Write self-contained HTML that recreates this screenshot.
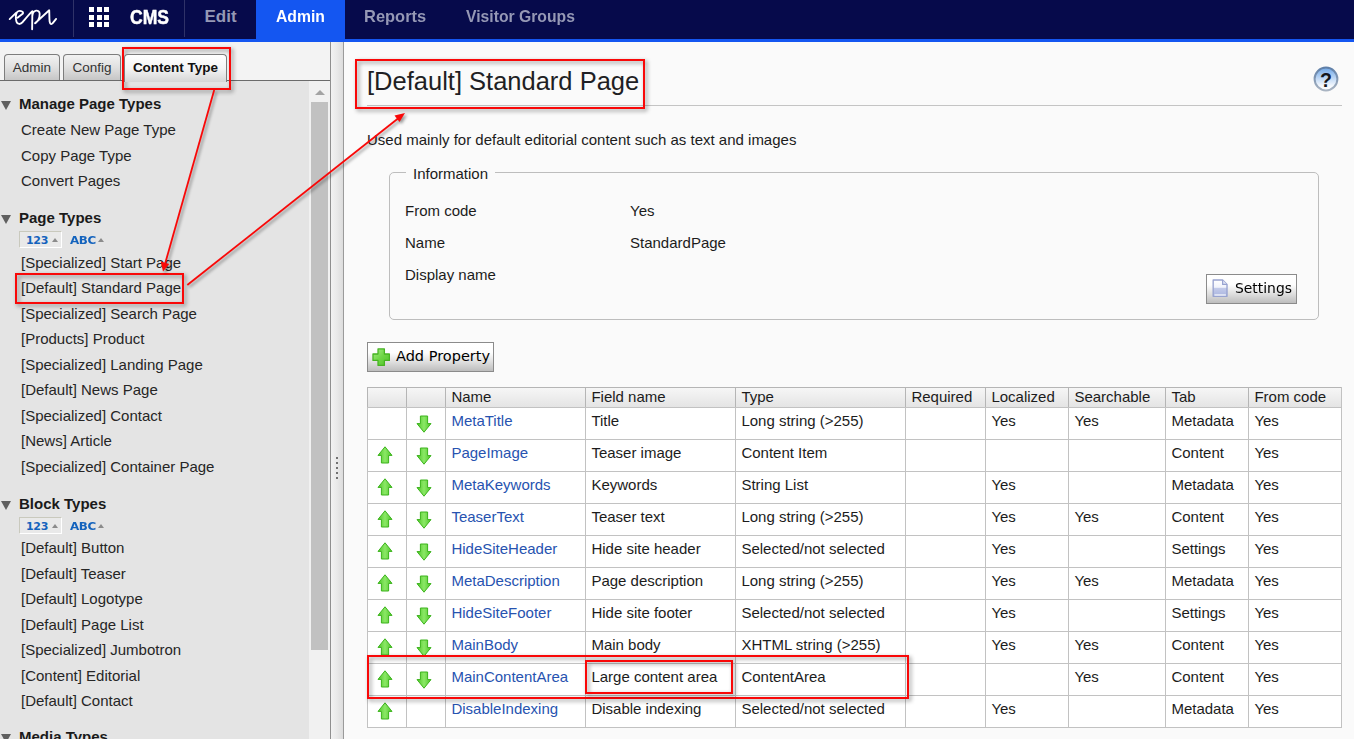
<!DOCTYPE html>
<html lang="en">
<head>
<meta charset="utf-8">
<title>CMS Admin - [Default] Standard Page</title>
<style>
*{box-sizing:border-box;margin:0;padding:0}
html,body{width:1354px;height:739px;overflow:hidden;background:#fafafa}
body{font-family:"Liberation Sans",Arial,sans-serif;font-size:15px;color:#1c1c1c;position:relative}
.abs{position:absolute}
/* ---------- top navigation ---------- */
#nav{position:absolute;left:0;top:0;width:1354px;height:39px;background:#060a4b}
#navbar{position:absolute;left:0;top:39px;width:1354px;height:3px;background:#1456f1}
#nav .div{position:absolute;top:0;width:1px;height:37px;background:#2f3268}
#nav .item{position:absolute;top:0;height:38px;line-height:33px;font-size:17px;font-weight:bold;color:#9598b5;white-space:nowrap;transform-origin:0 50%}
#nav .active{position:absolute;left:256px;top:0;width:89px;height:39px;background:#1456f1}
#nav .cms{position:absolute;left:130px;top:0;height:38px;line-height:35px;font-size:19.5px;font-weight:bold;color:#fff;transform-origin:0 50%;transform:scaleX(.9);-webkit-text-stroke:.45px #fff}
#grid{position:absolute;left:89px;top:7px;width:20px;height:20px}
#grid i{position:absolute;width:5px;height:5px;background:#fff}
/* ---------- left panel ---------- */
#left{position:absolute;left:0;top:42px;width:331px;height:697px;background:#e4e4e4;overflow:hidden}
#tabstrip{position:absolute;left:0;top:0;width:331px;height:38px;background:#f3f3f3}
#tabline{position:absolute;left:0;top:38px;width:331px;height:1px;background:#6b6b6b}
.tab{position:absolute;top:12px;height:26px;border:1px solid #7d7d7d;border-bottom:none;border-radius:4px 4px 0 0;background:linear-gradient(#f2f2f2,#e0e0e0 50%,#c6c6c6);font-size:13.5px;line-height:25px;text-align:center;color:#333;white-space:nowrap}
.tab.sel{background:linear-gradient(#ffffff,#f4f4f4 50%,#d6d6d6);font-weight:bold;color:#111;height:28px;z-index:2}
#list{position:absolute;left:0;top:39px;width:310px}
.hd{position:absolute;left:19px;font-weight:bold;font-size:15px;line-height:20px;color:#1a1a1a;white-space:nowrap}
.tri{position:absolute;left:1px;width:0;height:0;border-left:5.5px solid transparent;border-right:5.5px solid transparent;border-top:9.5px solid #5f5f5f}
.it{position:absolute;left:21px;font-size:15px;line-height:20px;color:#262626;white-space:nowrap}
.sort{position:absolute;height:17px;font-family:"DejaVu Sans","Liberation Sans",sans-serif;font-weight:bold;font-size:11px;line-height:19px;color:#1463bd;white-space:nowrap;letter-spacing:-.3px}
.sort.box{line-height:17px;border:1px solid;border-color:#c9c9bd #fff #fff #c9c9bd;background:#e9e9e9}
.sort b{position:absolute;width:0;height:0;border-left:3.5px solid transparent;border-right:3.5px solid transparent;border-bottom:4px solid #8b8b8b}
.sort span{display:inline-block;transform-origin:0 50%}
#sbtrack{position:absolute;left:309px;top:39px;width:22px;height:658px;background:#f1f1f1}
#sbthumb{position:absolute;left:311px;top:60px;width:17px;height:548px;background:#c1c1c1}
#sbarrow{position:absolute;left:315px;top:48px;width:0;height:0;border-left:5px solid transparent;border-right:5px solid transparent;border-bottom:5px solid #a3a3a3}
#leftedge{position:absolute;left:330px;top:42px;width:1px;height:697px;background:#8f8f8f}
/* ---------- splitter ---------- */
#split{position:absolute;left:331px;top:42px;width:13px;height:697px;background:linear-gradient(90deg,#f2f2f2,#e9e9e9 50%,#dcdcdc);border-right:1px solid #9a9a9a}
#split i{position:absolute;left:5px;width:2.4px;height:2.4px;border-radius:1px;background:#4a4a4a}
/* ---------- content ---------- */
#content{position:absolute;left:344px;top:42px;width:1010px;height:697px;background:#fafafa}
h1{position:absolute;left:367px;top:63px;font-size:25.5px;font-weight:normal;line-height:36px;color:#1f1f24;white-space:nowrap}
#h1line{position:absolute;left:367px;top:105px;width:975px;height:1px;background:#c4c4c4}
#desc{position:absolute;left:367px;top:130px;line-height:20px;white-space:nowrap;color:#1c1c1c}
#help{position:absolute;left:1312.3px;top:65.4px;width:28px;height:28px}
#fs{position:absolute;left:389px;top:172px;width:930px;height:148px;border:1px solid #bdbdbd;border-radius:5px}
#fs .lg{position:absolute;left:16px;top:-9px;padding:0 7px;background:#fafafa;line-height:20px;white-space:nowrap}
.k,.v{position:absolute;line-height:20px;white-space:nowrap}
.k{left:405px}.v{left:630px}
.btn{position:absolute;border:1px solid #8b8b8b;background:linear-gradient(#ffffff,#fdfdfd 35%,#dcdcdc 70%,#bdbdbd);font-family:"DejaVu Sans","Liberation Sans",sans-serif;font-size:14.5px;color:#000;white-space:nowrap}
/* ---------- table ---------- */
#tbl{position:absolute;left:367px;top:387px;border-collapse:separate;border-spacing:0;table-layout:fixed;width:975px;background:#fff;border-right:1px solid #c2c2c2;border-bottom:1px solid #c2c2c2}
#tbl th,#tbl td{border-left:1px solid #c2c2c2;border-top:1px solid #c2c2c2;font-weight:normal;text-align:left;padding:0 0 0 5.4px;white-space:nowrap;overflow:hidden;vertical-align:top;color:#1c1c1c}
#tbl th{height:20px;line-height:18px;background:linear-gradient(#f6f6f6,#e4e4e4);border-color:#b5b5b5}
#tbl td{height:32px;line-height:26px}
#tbl a{color:#2753b0;text-decoration:none}
#tbl td.ic{padding:0}
#tbl svg{display:block;margin:5.7px 0 0 9px}
#tbl svg.dn{margin:7px 0 0 9px}
/* ---------- annotations ---------- */
.rbox{position:absolute;border:2px solid #f90808;filter:drop-shadow(2.5px 2.5px 2px rgba(0,0,0,.45))}
#anno{position:absolute;left:0;top:0;width:1354px;height:739px;pointer-events:none;filter:drop-shadow(2px 2px 1.5px rgba(0,0,0,.4))}
</style>
</head>
<body>

<!-- top navigation -->
<div id="nav">
  <svg class="abs" style="left:4px;top:4px" width="60" height="32" viewBox="0 0 1354 722" fill="none" stroke="#fff" stroke-width="42" stroke-linecap="round" stroke-linejoin="round"><path d="M128 340 L278 195 M305 308 L428 212 C448 162 338 130 292 186 C268 230 262 330 282 400 C300 462 372 468 420 410 C480 340 560 240 640 162 L635 572 M642 260 C650 130 800 112 805 220 C810 330 740 420 700 435 L1020 142 C1025 200 1020 330 1030 400 C1040 470 1080 460 1100 430 L1176 337"/></svg>
  <div class="div" style="left:73px"></div>
  <div id="grid"><i style="left:0;top:0"></i><i style="left:7.5px;top:0"></i><i style="left:15px;top:0"></i><i style="left:0;top:7.5px"></i><i style="left:7.5px;top:7.5px"></i><i style="left:15px;top:7.5px"></i><i style="left:0;top:15px"></i><i style="left:7.5px;top:15px"></i><i style="left:15px;top:15px"></i></div>
  <div class="cms">CMS</div>
  <div class="div" style="left:184px"></div>
  <div class="active"></div>
  <div class="item" style="left:204.5px">Edit</div>
  <div class="item" style="left:276px;color:#fff;transform:scaleX(.925)">Admin</div>
  <div class="item" style="left:364px;transform:scaleX(.968)">Reports</div>
  <div class="item" style="left:466px;transform:scaleX(.925)">Visitor Groups</div>
</div>
<div id="navbar"></div>

<!-- left panel -->
<div id="left">
  <div id="tabstrip"></div>
  <div id="tabline"></div>
  <div class="tab" style="left:4px;width:56px">Admin</div>
  <div class="tab" style="left:63px;width:58px">Config</div>
  <div class="tab sel" style="left:124px;width:103px">Content Type</div>
  <div id="sbtrack"></div><div id="sbthumb"></div><div id="sbarrow"></div>
  <div id="list">
    <div class="tri" style="top:20px"></div><div class="hd" style="top:13px">Manage Page Types</div>
    <div class="it" style="top:39px">Create New Page Type</div>
    <div class="it" style="top:65px">Copy Page Type</div>
    <div class="it" style="top:90px">Convert Pages</div>

    <div class="tri" style="top:134px"></div><div class="hd" style="top:127px">Page Types</div>
    <div class="sort box" style="left:19px;top:150px;width:43px;padding-left:6px"><span style="transform:scaleX(1.0)">123</span><b style="left:32px;top:6px"></b></div>
    <div class="sort" style="left:70px;top:150px;width:36px"><span style="transform:scaleX(1.08)">ABC</span><b style="left:28px;top:7px"></b></div>
    <div class="it" style="top:172px">[Specialized] Start Page</div>
    <div class="it" style="top:197px">[Default] Standard Page</div>
    <div class="it" style="top:223px">[Specialized] Search Page</div>
    <div class="it" style="top:248px">[Products] Product</div>
    <div class="it" style="top:274px">[Specialized] Landing Page</div>
    <div class="it" style="top:299px">[Default] News Page</div>
    <div class="it" style="top:325px">[Specialized] Contact</div>
    <div class="it" style="top:350px">[News] Article</div>
    <div class="it" style="top:376px">[Specialized] Container Page</div>

    <div class="tri" style="top:420px"></div><div class="hd" style="top:413px">Block Types</div>
    <div class="sort box" style="left:19px;top:436px;width:43px;padding-left:6px"><span style="transform:scaleX(1.0)">123</span><b style="left:32px;top:6px"></b></div>
    <div class="sort" style="left:70px;top:436px;width:36px"><span style="transform:scaleX(1.08)">ABC</span><b style="left:28px;top:7px"></b></div>
    <div class="it" style="top:457px">[Default] Button</div>
    <div class="it" style="top:483px">[Default] Teaser</div>
    <div class="it" style="top:508px">[Default] Logotype</div>
    <div class="it" style="top:534px">[Default] Page List</div>
    <div class="it" style="top:559px">[Specialized] Jumbotron</div>
    <div class="it" style="top:585px">[Content] Editorial</div>
    <div class="it" style="top:610px">[Default] Contact</div>

    <div class="tri" style="top:653px"></div><div class="hd" style="top:646px">Media Types</div>
  </div>
</div>
<div id="leftedge"></div>
<div id="split"><i style="top:414.5px"></i><i style="top:419.5px"></i><i style="top:424.5px"></i><i style="top:429.5px"></i><i style="top:434.5px"></i></div>

<!-- content -->
<div id="content"></div>
<h1>[Default] Standard Page</h1>
<div id="h1line"></div>
<svg id="help" viewBox="0 0 28 28"><defs><linearGradient id="hg" x1="0" y1="0" x2="0" y2="1"><stop offset="0" stop-color="#6fa6e6"/><stop offset=".45" stop-color="#bcd6f5"/><stop offset=".8" stop-color="#f4f8fd"/><stop offset="1" stop-color="#ffffff"/></linearGradient><linearGradient id="hr" x1="0" y1="0" x2="0" y2="1"><stop offset="0" stop-color="#5f7fa8"/><stop offset="1" stop-color="#a9b4c2"/></linearGradient></defs><circle cx="14" cy="14" r="11.4" fill="url(#hg)" stroke="url(#hr)" stroke-width="2"/><text x="14" y="22" text-anchor="middle" font-family="Liberation Sans, Arial, sans-serif" font-weight="bold" font-size="19.5" fill="#15161c">?</text></svg>
<div id="desc">Used mainly for default editorial content such as text and images</div>

<div id="fs"><div class="lg">Information</div></div>
<div class="k" style="top:201px">From code</div><div class="v" style="top:201px">Yes</div>
<div class="k" style="top:233px">Name</div><div class="v" style="top:233px">StandardPage</div>
<div class="k" style="top:265px">Display name</div>
<div class="btn" style="left:1206px;top:274px;width:91px;height:30px;line-height:27px;padding-left:27.5px"><svg class="abs" style="left:5px;top:4px" width="16.4" height="18.3" viewBox="0 0 17 19"><defs><linearGradient id="pg" x1="0" y1="0" x2="0" y2="1"><stop offset="0" stop-color="#ffffff"/><stop offset=".45" stop-color="#f1f3fb"/><stop offset=".5" stop-color="#c3cbea"/><stop offset="1" stop-color="#aab5df"/></linearGradient></defs><path d="M1.2 1 L11 1 L15.6 5.6 L15.6 18 L1.2 18 Z" fill="url(#pg)" stroke="#98a3d0" stroke-width="1.4" stroke-linejoin="round"/><path d="M11 1 L11 5.6 L15.6 5.6" fill="#dfe4f5" stroke="#98a3d0" stroke-width="1.2" stroke-linejoin="round"/><path d="M2.5 16.6 L14.4 16.6" stroke="#ffffff" stroke-width="1.2"/></svg><span style="display:inline-block;transform-origin:0 50%;transform:scaleX(.958)">Settings</span></div>
<div class="btn" style="left:367px;top:342px;width:127px;height:30px;line-height:27px;padding-left:28px"><svg class="abs" style="left:4px;top:5px" width="18.4" height="18.4" viewBox="0 0 19 19"><defs><linearGradient id="plg" x1="0" y1="0" x2="1" y2="1"><stop offset="0" stop-color="#a5ec86"/><stop offset=".5" stop-color="#6fd646"/><stop offset="1" stop-color="#4fc226"/></linearGradient></defs><path d="M6.2 1 H12.8 V6.2 H18 V12.8 H12.8 V18 H6.2 V12.8 H1 V6.2 H6.2 Z" fill="url(#plg)" stroke="#46b322" stroke-width="1.3" stroke-linejoin="round"/></svg>Add Property</div>

<!-- property table -->
<!--TBL-START-->
<svg width="0" height="0" style="position:absolute"><defs>
<linearGradient id="gg" x1="0" y1="0" x2="1" y2="0"><stop offset="0" stop-color="#4cc526"/><stop offset=".5" stop-color="#8be866"/><stop offset="1" stop-color="#4cc526"/></linearGradient>
</defs></svg>
<table id="tbl" cellspacing="0">
<colgroup><col style="width:39px"><col style="width:39px"><col style="width:140px"><col style="width:150px"><col style="width:170px"><col style="width:80px"><col style="width:83px"><col style="width:97px"><col style="width:83px"><col style="width:93px"></colgroup>
<tr><th></th><th></th><th>Name</th><th>Field name</th><th>Type</th><th>Required</th><th>Localized</th><th>Searchable</th><th>Tab</th><th>From code</th></tr>
<tr><td class="ic"></td><td class="ic"><svg class="dn" width="16" height="18" viewBox="0 0 16 18"><path d="M8 17.2 L15 8.6 L11.6 8.6 L11.6 1 L4.4 1 L4.4 8.6 L1 8.6 Z" fill="url(#gg)" stroke="#3cb31c" stroke-width="1" stroke-linejoin="round"/></svg></td><td><a>MetaTitle</a></td><td>Title</td><td>Long string (&gt;255)</td><td></td><td>Yes</td><td>Yes</td><td>Metadata</td><td>Yes</td></tr>
<tr><td class="ic"><svg class="up" width="16" height="18" viewBox="0 0 16 18"><path d="M8 .8 L15 9.4 L11.6 9.4 L11.6 17 L4.4 17 L4.4 9.4 L1 9.4 Z" fill="url(#gg)" stroke="#3cb31c" stroke-width="1" stroke-linejoin="round"/></svg></td><td class="ic"><svg class="dn" width="16" height="18" viewBox="0 0 16 18"><path d="M8 17.2 L15 8.6 L11.6 8.6 L11.6 1 L4.4 1 L4.4 8.6 L1 8.6 Z" fill="url(#gg)" stroke="#3cb31c" stroke-width="1" stroke-linejoin="round"/></svg></td><td><a>PageImage</a></td><td>Teaser image</td><td>Content Item</td><td></td><td></td><td></td><td>Content</td><td>Yes</td></tr>
<tr><td class="ic"><svg class="up" width="16" height="18" viewBox="0 0 16 18"><path d="M8 .8 L15 9.4 L11.6 9.4 L11.6 17 L4.4 17 L4.4 9.4 L1 9.4 Z" fill="url(#gg)" stroke="#3cb31c" stroke-width="1" stroke-linejoin="round"/></svg></td><td class="ic"><svg class="dn" width="16" height="18" viewBox="0 0 16 18"><path d="M8 17.2 L15 8.6 L11.6 8.6 L11.6 1 L4.4 1 L4.4 8.6 L1 8.6 Z" fill="url(#gg)" stroke="#3cb31c" stroke-width="1" stroke-linejoin="round"/></svg></td><td><a>MetaKeywords</a></td><td>Keywords</td><td>String List</td><td></td><td>Yes</td><td></td><td>Metadata</td><td>Yes</td></tr>
<tr><td class="ic"><svg class="up" width="16" height="18" viewBox="0 0 16 18"><path d="M8 .8 L15 9.4 L11.6 9.4 L11.6 17 L4.4 17 L4.4 9.4 L1 9.4 Z" fill="url(#gg)" stroke="#3cb31c" stroke-width="1" stroke-linejoin="round"/></svg></td><td class="ic"><svg class="dn" width="16" height="18" viewBox="0 0 16 18"><path d="M8 17.2 L15 8.6 L11.6 8.6 L11.6 1 L4.4 1 L4.4 8.6 L1 8.6 Z" fill="url(#gg)" stroke="#3cb31c" stroke-width="1" stroke-linejoin="round"/></svg></td><td><a>TeaserText</a></td><td>Teaser text</td><td>Long string (&gt;255)</td><td></td><td>Yes</td><td>Yes</td><td>Content</td><td>Yes</td></tr>
<tr><td class="ic"><svg class="up" width="16" height="18" viewBox="0 0 16 18"><path d="M8 .8 L15 9.4 L11.6 9.4 L11.6 17 L4.4 17 L4.4 9.4 L1 9.4 Z" fill="url(#gg)" stroke="#3cb31c" stroke-width="1" stroke-linejoin="round"/></svg></td><td class="ic"><svg class="dn" width="16" height="18" viewBox="0 0 16 18"><path d="M8 17.2 L15 8.6 L11.6 8.6 L11.6 1 L4.4 1 L4.4 8.6 L1 8.6 Z" fill="url(#gg)" stroke="#3cb31c" stroke-width="1" stroke-linejoin="round"/></svg></td><td><a>HideSiteHeader</a></td><td>Hide site header</td><td>Selected/not selected</td><td></td><td>Yes</td><td></td><td>Settings</td><td>Yes</td></tr>
<tr><td class="ic"><svg class="up" width="16" height="18" viewBox="0 0 16 18"><path d="M8 .8 L15 9.4 L11.6 9.4 L11.6 17 L4.4 17 L4.4 9.4 L1 9.4 Z" fill="url(#gg)" stroke="#3cb31c" stroke-width="1" stroke-linejoin="round"/></svg></td><td class="ic"><svg class="dn" width="16" height="18" viewBox="0 0 16 18"><path d="M8 17.2 L15 8.6 L11.6 8.6 L11.6 1 L4.4 1 L4.4 8.6 L1 8.6 Z" fill="url(#gg)" stroke="#3cb31c" stroke-width="1" stroke-linejoin="round"/></svg></td><td><a>MetaDescription</a></td><td>Page description</td><td>Long string (&gt;255)</td><td></td><td>Yes</td><td>Yes</td><td>Metadata</td><td>Yes</td></tr>
<tr><td class="ic"><svg class="up" width="16" height="18" viewBox="0 0 16 18"><path d="M8 .8 L15 9.4 L11.6 9.4 L11.6 17 L4.4 17 L4.4 9.4 L1 9.4 Z" fill="url(#gg)" stroke="#3cb31c" stroke-width="1" stroke-linejoin="round"/></svg></td><td class="ic"><svg class="dn" width="16" height="18" viewBox="0 0 16 18"><path d="M8 17.2 L15 8.6 L11.6 8.6 L11.6 1 L4.4 1 L4.4 8.6 L1 8.6 Z" fill="url(#gg)" stroke="#3cb31c" stroke-width="1" stroke-linejoin="round"/></svg></td><td><a>HideSiteFooter</a></td><td>Hide site footer</td><td>Selected/not selected</td><td></td><td>Yes</td><td></td><td>Settings</td><td>Yes</td></tr>
<tr><td class="ic"><svg class="up" width="16" height="18" viewBox="0 0 16 18"><path d="M8 .8 L15 9.4 L11.6 9.4 L11.6 17 L4.4 17 L4.4 9.4 L1 9.4 Z" fill="url(#gg)" stroke="#3cb31c" stroke-width="1" stroke-linejoin="round"/></svg></td><td class="ic"><svg class="dn" width="16" height="18" viewBox="0 0 16 18"><path d="M8 17.2 L15 8.6 L11.6 8.6 L11.6 1 L4.4 1 L4.4 8.6 L1 8.6 Z" fill="url(#gg)" stroke="#3cb31c" stroke-width="1" stroke-linejoin="round"/></svg></td><td><a>MainBody</a></td><td>Main body</td><td>XHTML string (&gt;255)</td><td></td><td>Yes</td><td>Yes</td><td>Content</td><td>Yes</td></tr>
<tr><td class="ic"><svg class="up" width="16" height="18" viewBox="0 0 16 18"><path d="M8 .8 L15 9.4 L11.6 9.4 L11.6 17 L4.4 17 L4.4 9.4 L1 9.4 Z" fill="url(#gg)" stroke="#3cb31c" stroke-width="1" stroke-linejoin="round"/></svg></td><td class="ic"><svg class="dn" width="16" height="18" viewBox="0 0 16 18"><path d="M8 17.2 L15 8.6 L11.6 8.6 L11.6 1 L4.4 1 L4.4 8.6 L1 8.6 Z" fill="url(#gg)" stroke="#3cb31c" stroke-width="1" stroke-linejoin="round"/></svg></td><td><a>MainContentArea</a></td><td>Large content area</td><td>ContentArea</td><td></td><td></td><td>Yes</td><td>Content</td><td>Yes</td></tr>
<tr><td class="ic"><svg class="up" width="16" height="18" viewBox="0 0 16 18"><path d="M8 .8 L15 9.4 L11.6 9.4 L11.6 17 L4.4 17 L4.4 9.4 L1 9.4 Z" fill="url(#gg)" stroke="#3cb31c" stroke-width="1" stroke-linejoin="round"/></svg></td><td class="ic"></td><td><a>DisableIndexing</a></td><td>Disable indexing</td><td>Selected/not selected</td><td></td><td>Yes</td><td></td><td>Metadata</td><td>Yes</td></tr>
</table>
<!--TBL-END-->

<!-- annotations -->
<div class="rbox" style="left:122px;top:47px;width:109px;height:43px"></div>
<div class="rbox" style="left:15px;top:273px;width:169px;height:31px"></div>
<div class="rbox" style="left:355px;top:59px;width:290px;height:50px"></div>
<div class="rbox" style="left:367px;top:655px;width:541.6px;height:43.6px"></div>
<div class="rbox" style="left:585px;top:660px;width:148px;height:33.6px"></div>
<svg id="anno" viewBox="0 0 1354 739">
  <line x1="214.2" y1="90" x2="165.3" y2="263" stroke="#f90808" stroke-width="1.8"/>
  <polygon points="163,271.5 160.8,261.5 169.2,264" fill="#f90808"/>
  <line x1="187.3" y1="285" x2="398" y2="118.5" stroke="#f90808" stroke-width="1.8"/>
  <polygon points="405,113 399.5,122 394.5,115.5" fill="#f90808"/>
</svg>

</body>
</html>
